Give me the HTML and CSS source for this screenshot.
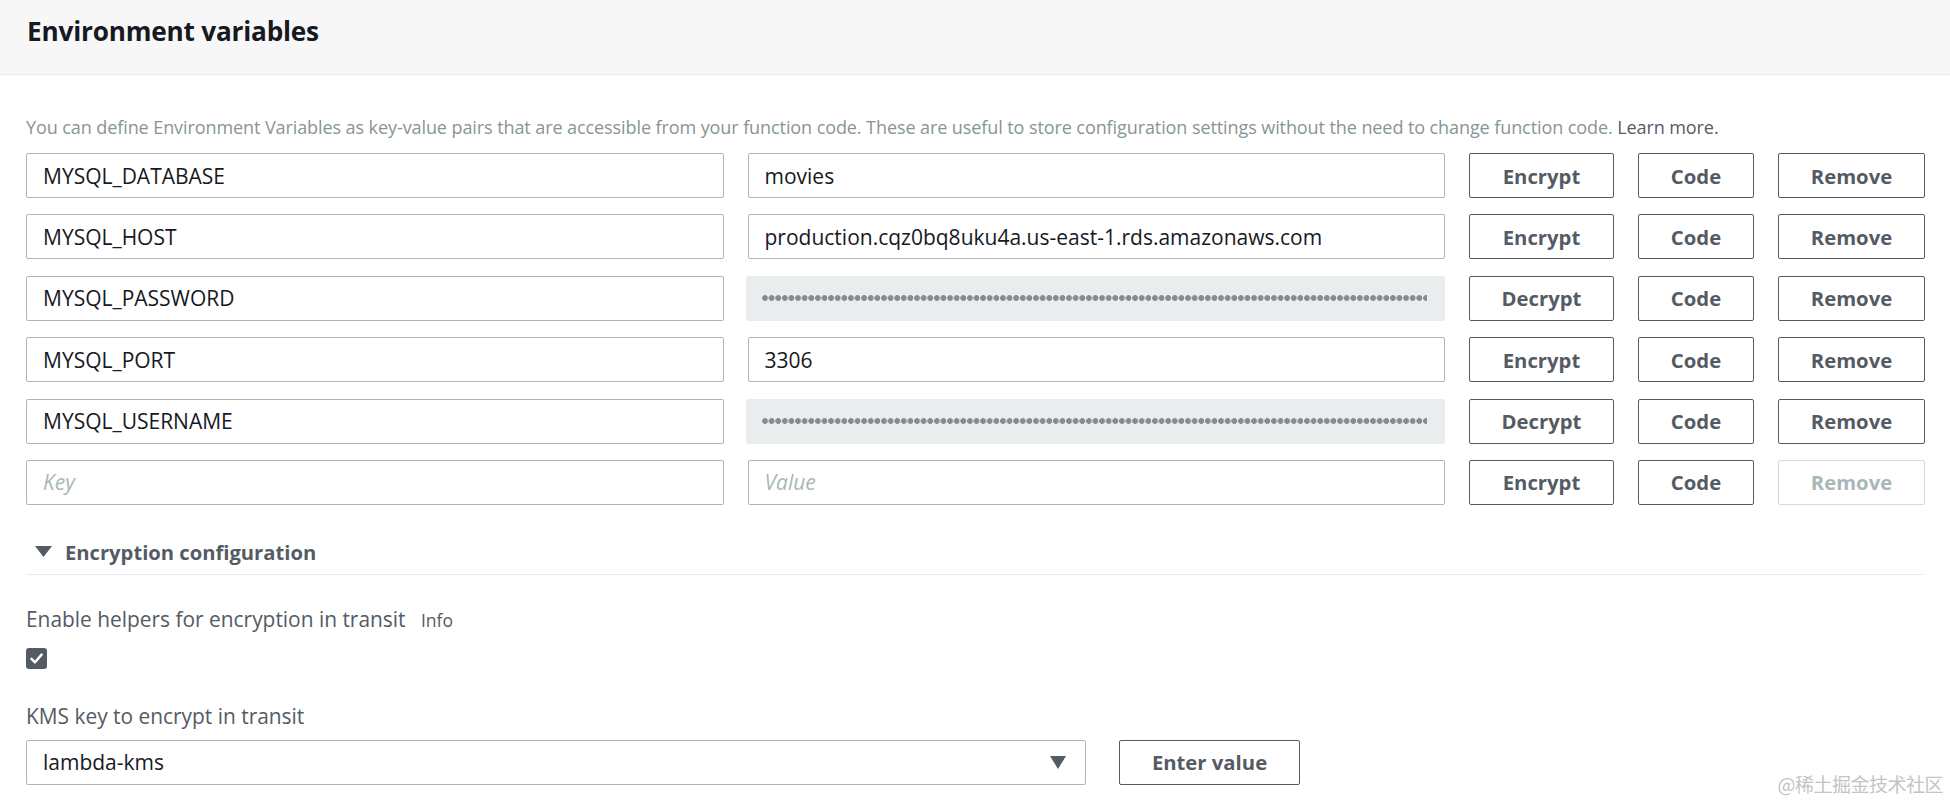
FILE: index.html
```html
<!DOCTYPE html>
<html lang="en">
<head>
<meta charset="utf-8">
<title>Environment variables</title>
<link rel="stylesheet" href="styles.css">
</head>
<body>
<div class="panel">
    <div class="panel-header">
        <h2>Environment variables</h2>
    </div>
    <div class="panel-body">
        <p class="hint">You can define Environment Variables as key-value pairs that are accessible from your function code. These are useful to store configuration settings without the need to change function code. <a href="#">Learn more.</a></p>

        <div class="env-table">
            <input class="text-input" value="MYSQL_DATABASE" readonly>
            <input class="text-input" value="movies" readonly>
            <button class="btn">Encrypt</button>
            <button class="btn">Code</button>
            <button class="btn">Remove</button>

            <input class="text-input" value="MYSQL_HOST" readonly>
            <input class="text-input" value="production.cqz0bq8uku4a.us-east-1.rds.amazonaws.com" readonly>
            <button class="btn">Encrypt</button>
            <button class="btn">Code</button>
            <button class="btn">Remove</button>

            <input class="text-input" value="MYSQL_PASSWORD" readonly>
            <div class="masked"><span class="dots"></span></div>
            <button class="btn">Decrypt</button>
            <button class="btn">Code</button>
            <button class="btn">Remove</button>

            <input class="text-input" value="MYSQL_PORT" readonly>
            <input class="text-input" value="3306" readonly>
            <button class="btn">Encrypt</button>
            <button class="btn">Code</button>
            <button class="btn">Remove</button>

            <input class="text-input" value="MYSQL_USERNAME" readonly>
            <div class="masked"><span class="dots"></span></div>
            <button class="btn">Decrypt</button>
            <button class="btn">Code</button>
            <button class="btn">Remove</button>

            <input class="text-input" placeholder="Key">
            <input class="text-input" placeholder="Value">
            <button class="btn">Encrypt</button>
            <button class="btn">Code</button>
            <button class="btn" disabled>Remove</button>
        </div>

        <div class="expander">
            <svg class="caret" width="17" height="11" viewBox="0 0 17 11"><polygon points="0,0 17,0 8.5,11" fill="#545b64"/></svg>
            <span>Encryption configuration</span>
        </div>

        <div class="field field-first">
            <div class="field-label">Enable helpers for encryption in transit <span class="info">Info</span></div>
            <span class="checkbox">
                <svg width="21" height="21" viewBox="0 0 21 21"><path d="M5.5 10.8 L9 14.3 L15.6 6.6" fill="none" stroke="#fff" stroke-width="2.4" stroke-linecap="round" stroke-linejoin="round"/></svg>
            </span>
        </div>

        <div class="field">
            <div class="field-label">KMS key to encrypt in transit</div>
            <div class="kms-row">
                <div class="select">
                    <span>lambda-kms</span>
                    <svg width="16" height="13" viewBox="0 0 16 13"><polygon points="0,0 16,0 8,13" fill="#545b64"/></svg>
                </div>
                <button class="btn btn-wide">Enter value</button>
            </div>
        </div>
    </div>
</div>
<div class="watermark">@稀土掘金技术社区</div>
</body>
</html>
```

FILE: styles.css
```css
body, html {
    margin: 0;
    padding: 0;
    height: 100%;
    overflow: hidden;
    background: #fff;
}
body {
    font-family: "Open Sans", "Noto Sans", sans-serif;
    color: #16191f;
    position: relative;
}
.panel-header {
    height: 74px;
    background: #f7f7f7;
    border-bottom: 1px solid #e8eaea;
    display: flex;
    align-items: center;
    padding: 0 27px;
}
.panel-header h2 {
    margin: 0 0 13px;
    font-size: 26.2px;
    font-weight: 700;
    color: #16191f;
    letter-spacing: -0.2px;
}
.panel-body {
    padding: 40px 25px 0 26px;
}
.hint {
    margin: 0 0 14px;
    font-size: 18.05px;
    line-height: 24px;
    color: #879596;
    letter-spacing: -0.1px;
}
.hint a {
    color: #545b64;
    text-decoration: none;
}
.env-table {
    display: grid;
    grid-template-columns: 1fr 1fr 145px 116px 147px;
    grid-auto-rows: 45px;
    column-gap: 24px;
    row-gap: 16.4px;
}
.text-input {
    font-family: inherit;
    font-size: 21px;
    color: #16191f;
    border: 1px solid #aab7b8;
    border-radius: 2px;
    padding: 0 15px 0 16px;
    margin: 0;
    height: 45px;
    box-sizing: border-box;
    min-width: 0;
    outline: none;
    background: #fff;
}
.text-input::placeholder {
    color: #aab7b8;
    font-style: italic;
}
.masked {
    background: #eaeded;
    border-radius: 2px;
    display: flex;
    align-items: center;
    padding: 0 18px 0 16px;
    margin-left: -2px;
}
.dots {
    flex: 1;
    height: 6px;
    background-image: radial-gradient(circle at 3px 3px, #848d8e 2.6px, transparent 3.1px);
    background-size: 6.62px 6px;
    background-repeat: repeat-x;
}
.btn {
    font-family: inherit;
    font-size: 20.3px;
    font-weight: 700;
    color: #545b64;
    background: #fff;
    border: 1px solid #545b64;
    border-radius: 2px;
    padding: 0;
    margin: 0;
    height: 45px;
    cursor: pointer;
}
.btn:disabled {
    color: #aab7b8;
    border-color: #d5dbdb;
    cursor: default;
}
.expander {
    margin-top: 32px;
    display: flex;
    align-items: center;
    height: 30px;
    padding-bottom: 7px;
    border-bottom: 1px solid #eaeded;
    color: #545b64;
    font-size: 20.2px;
    font-weight: 700;
}
.caret {
    margin: 0 13px 0 9px;
}
.field {
    margin-top: 32.5px;
}
.field-first {
    margin-top: 30.5px;
}
.field-label {
    font-size: 20.9px;
    line-height: 28px;
    color: #545b64;
}
.info {
    font-size: 17.5px;
    margin-left: 10px;
    color: #545b64;
}
.checkbox {
    display: block;
    width: 21px;
    height: 21px;
    margin-top: 14px;
    background: #545b64;
    border-radius: 3px;
}
.checkbox svg {
    display: block;
}
.kms-row {
    display: flex;
    gap: 33px;
    margin-top: 10px;
}
.select {
    width: 1060px;
    height: 45px;
    box-sizing: border-box;
    border: 1px solid #aab7b8;
    border-radius: 2px;
    display: flex;
    align-items: center;
    justify-content: space-between;
    padding: 0 19px 0 16px;
    font-size: 21px;
    color: #16191f;
}
.btn-wide {
    width: 181px;
}
.watermark {
    position: absolute;
    right: 7px;
    bottom: 4px;
    font-family: "Noto Sans CJK SC", sans-serif;
    font-size: 19px;
    color: #c4c4c4;
    letter-spacing: -0.5px;
}
```
